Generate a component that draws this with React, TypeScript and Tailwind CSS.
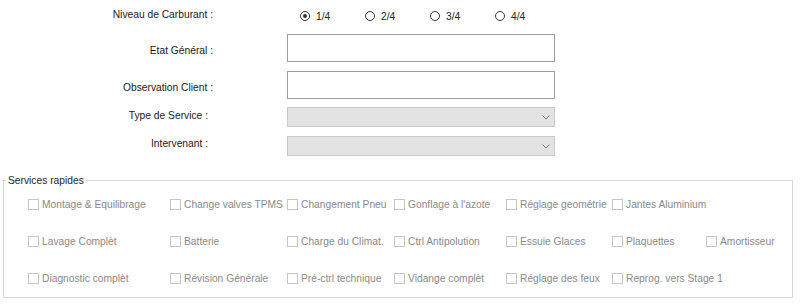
import React, { useState } from 'react'

const services = [
  ['Montage & Equilibrage', 'Change valves TPMS', 'Changement Pneu', "Gonflage à l'azote", 'Réglage geométrie', 'Jantes Aluminium'],
  ['Lavage Complèt', 'Batterie', 'Charge du Climat.', 'Ctrl Antipolution', 'Essuie Glaces', 'Plaquettes', 'Amortisseur'],
  ['Diagnostic complèt', 'Révision Générale', 'Pré-ctrl technique', 'Vidange complèt', 'Réglage des feux', 'Reprog. vers Stage 1'],
]

function Radio({ label, checked, onClick }: { label: string; checked: boolean; onClick: () => void }) {
  return (
    <button onClick={onClick} className="flex w-[65px] items-center">
      <span className="flex h-[10px] w-[10px] items-center justify-center rounded-full border border-[#333]">
        {checked && <span className="h-[4px] w-[4px] rounded-full bg-[#333]" />}
      </span>
      <span className="ml-[6px] text-[#222]">{label}</span>
    </button>
  )
}

function Combo() {
  return (
    <div className="flex h-[20px] w-[268px] items-center justify-end border border-[#c9c9c9] bg-[#e3e3e3] pr-[4px]">
      <svg width="8" height="5" viewBox="0 0 8 5" fill="none">
        <path d="M0.5 0.5 L4 4 L7.5 0.5" stroke="#7a7a7a" strokeWidth="1" />
      </svg>
    </div>
  )
}

function Check({ label }: { label: string }) {
  return (
    <div className="flex items-center">
      <span className="h-[11px] w-[11px] shrink-0 border border-[#c6c6c6] bg-white" />
      <span className="ml-[3px] whitespace-nowrap text-[#8a8a8a]">{label}</span>
    </div>
  )
}

export default function App() {
  const [fuel, setFuel] = useState('1/4')

  return (
    <div className="h-[307px] w-[800px] bg-white text-[10.25px] leading-[13px] text-[#1a1a1a] [font-family:'Liberation_Sans',Arial,sans-serif]">
      <div className="pt-[6px]">
        <div className="flex h-[20px] items-center">
          <div className="w-[213px] pb-[4px] text-right">Niveau de Carburant :</div>
          <div className="ml-[87px] flex">
            {['1/4', '2/4', '3/4', '4/4'].map((f) => (
              <Radio key={f} label={f} checked={fuel === f} onClick={() => setFuel(f)} />
            ))}
          </div>
        </div>

        <div className="mt-[8px] flex h-[28px] items-center">
          <div className="w-[213px] pt-[4px] text-right">Etat Général :</div>
          <div className="ml-[74px] h-[28px] w-[268px] border border-[#9c9c9c] bg-white" />
        </div>

        <div className="mt-[9px] flex h-[28px] items-center">
          <div className="w-[213px] pt-[4px] text-right">Observation Client :</div>
          <div className="ml-[74px] h-[28px] w-[268px] border border-[#9c9c9c] bg-white" />
        </div>

        <div className="mt-[8px] flex h-[20px] items-center">
          <div className="w-[213px] pb-[4px] pr-[5px] text-right">Type de Service :</div>
          <div className="ml-[74px]">
            <Combo />
          </div>
        </div>

        <div className="mt-[9px] flex h-[20px] items-center">
          <div className="w-[213px] pb-[6px] pr-[5px] text-right">Intervenant :</div>
          <div className="ml-[74px]">
            <Combo />
          </div>
        </div>
      </div>

      <fieldset className="ml-[3px] mt-[18px] w-[790px] border border-[#d6d6d6] pb-[12px] pt-[11px]">
        <legend className="ml-[2px] px-[2px] text-[#222]">Services rapides</legend>
        <div className="flex flex-col gap-[24px] pl-[24px]">
          {services.map((row, i) => (
            <div key={i} className="grid grid-cols-[142px_117px_107px_112px_106px_94px_auto]">
              {row.map((s) => (
                <Check key={s} label={s} />
              ))}
            </div>
          ))}
        </div>
      </fieldset>
    </div>
  )
}
